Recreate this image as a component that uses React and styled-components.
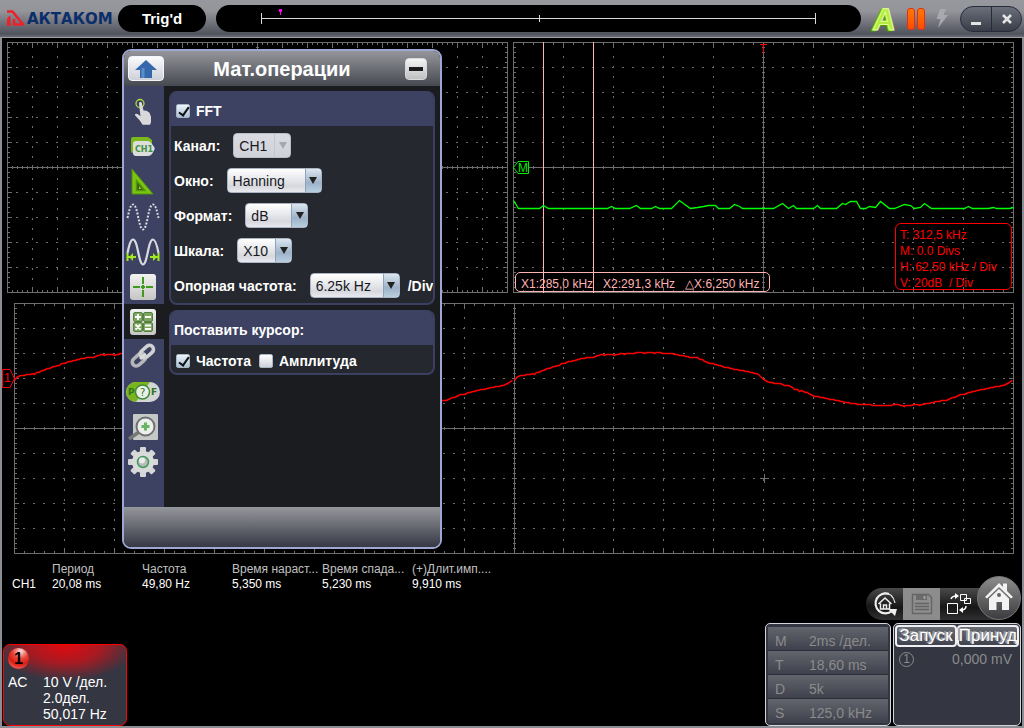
import styled, { createGlobalStyle } from 'styled-components'

const WAVE = [
    [0, 76], [4, 73], [10, 71.5], [20, 70.3], [29, 67], [41, 62.7], [50, 59.3], [57, 57.7], [66, 55.3], [79, 53.7],
    [86, 51.3], [100, 51], [114, 49.7], [132, 49.3], [152, 49.7], [161, 51], [171, 52.7], [184, 54.7], [191, 58],
    [200, 60.7], [210, 63.7], [219, 65.7], [232, 68], [242, 70], [246, 73], [249, 75.7], [256, 79.3], [264, 80],
    [274, 82.3], [281, 85.7], [294, 89.7], [300, 92.7], [309, 94.3], [322, 97], [339, 100.3], [352, 101.3],
    [367, 102.3], [382, 101.3], [391, 102], [409, 101], [419, 98.7], [432, 96.7], [442, 92.7], [454, 89.3],
    [466, 86.3], [479, 83.7], [489, 81.7], [496, 78.3], [499, 76.3],
]

const SPECTRUM = [
    [0, 158], [5, 166], [26, 166], [30, 163], [35, 166], [94, 166], [98, 164], [102, 166], [116, 166], [123, 163],
    [127, 166], [138, 166], [142, 164], [146, 166], [158, 166], [166, 158], [170, 161], [177, 166], [184, 165],
    [190, 164], [195, 163], [202, 163], [205, 166], [216, 166], [221, 162], [226, 164], [229, 166], [260, 166],
    [269, 161], [275, 166], [280, 163], [283, 166], [300, 166], [304, 163], [307, 166], [323, 166], [329, 161],
    [332, 162], [337, 159], [343, 159], [347, 166], [352, 166], [356, 164], [362, 165], [367, 159], [376, 166],
    [381, 166], [391, 162], [397, 163], [401, 166], [407, 165], [411, 161], [418, 166], [451, 166], [455, 164],
    [459, 166], [475, 166], [480, 165], [483, 166], [496, 166], [500, 165],
]

const MEASURES = [
    ['Период', '20,08 ms'],
    ['Частота', '49,80 Hz'],
    ['Время нараст...', '5,350 ms'],
    ['Время спада...', '5,230 ms'],
    ['(+)Длит.имп....', '9,910 ms'],
]

const TIMEBASE = [['M', '2ms /дел.'], ['T', '18,60 ms'], ['D', '5k'], ['S', '125,0 kHz']]

const toPoints = (list, dx = 0) => list.map(([x, y]) => `${x + dx + 0.5},${y + 0.5}`).join(' ')

// Sampled signal jumps a little around the smooth curve
const noisy = (list) => {
    const out = []
    for (let i = 0; i < list.length - 1; i++) {
        const [x1, y1] = list[i]
        const [x2, y2] = list[i + 1]
        for (let x = x1; x < x2; x += 2) {
            const y = y1 + ((y2 - y1) * (x - x1)) / (x2 - x1)
            out.push([x, Math.round(y + ((x * 7) % 5 === 0 ? 0.6 : -0.1))])
        }
    }
    return out
}

const TRACE = noisy(WAVE)

const Grid = ({ width, cols }) => {
    const div = width / cols
    const h = 250
    const ticks = []
    for (let i = 0; i <= cols * 5; i++) {
        const x = Math.round((i * div) / 5) + 0.5
        const len = i % 5 ? 2 : 5
        const mid = i % 5 ? 1 : 2
        ticks.push(`M${x} 0v${len + 1}M${x} ${h + 1}v-${len + 1}M${x} ${125 - mid}v${mid * 2 + 1}`)
    }
    for (let i = 0; i <= 50; i++) {
        const y = i * 5 + 0.5
        const len = i % 5 ? 2 : 4
        const mid = i % 5 ? 1 : 2
        ticks.push(`M0 ${y}h${len + 1}M${width + 1} ${y}h-${len + 1}M${Math.round(width / 2) - mid} ${y}h${mid * 2 + 1}`)
    }
    const dots = []
    for (let i = 1; i < cols; i++) {
        const x = Math.round(i * div) + 0.5
        dots.push(`M${x} 14V124M${x} 136V246`)
    }
    for (let i = 1; i < 10; i++) {
        dots.push(`M9 ${i * 25 + 0.5}H${width - 4}`)
    }
    return (
        <g fill="none" stroke="#6e6e6e" shapeRendering="crispEdges">
            <path d={`M.5 .5H${width + 0.5}V${h + 0.5}H.5ZM0 125.5H${width}M${Math.round(width / 2) + 0.5} 0V${h}`} />
            <path d={ticks.join('')} />
            <path d={dots.join('')} strokeDasharray="2 8" />
        </g>
    )
}

const Logo = () => (
    <LogoBox>
        <svg width="19" height="17" viewBox="0 0 19 17">
            <path d="M1 1.500h5.500L17 14.500H8V9" fill="none" stroke="#ee2029" strokeWidth="2.600" strokeLinejoin="round" />
            <path d="M1 8.500 4.500 5v11H1Z" fill="#ee2029" />
        </svg>
        <LogoText>АКТАКОМ</LogoText>
    </LogoBox>
)

const AutoIcon = () => (
    <svg width="28" height="30" viewBox="0 0 28 30" fontFamily="Liberation Sans" fontWeight="bold" fontSize="31">
        <g transform="skewX(-6)">
            <text x="4" y="27" fill="#4a9600" stroke="#4a9600">A</text>
            <text x="5" y="26" fill="#74bd12" stroke="#8fd41f">A</text>
            <text x="6" y="26" fill="#b5ec3c" stroke="#e0ff9c">A</text>
        </g>
    </svg>
)

const PauseIcon = () => (
    <svg width="20" height="24" viewBox="0 0 20 24">
        <defs>
            <linearGradient id="pause" x1="0" y1="0" x2="0" y2="1">
                <stop offset="0" stopColor="#ff7a00" />
                <stop offset="1" stopColor="#ff4a00" />
            </linearGradient>
        </defs>
        <rect x="1.500" y="1.500" width="7" height="21" rx="2.500" fill="url(#pause)" stroke="#e0301a" />
        <rect x="11.500" y="1.500" width="7" height="21" rx="2.500" fill="url(#pause)" stroke="#e0301a" />
    </svg>
)

const BoltIcon = () => (
    <svg width="14" height="21" viewBox="0 0 14 21">
        <path d="M5 1h6L8.500 7H13L3 20l2.500-9H1.500Z" fill="#a7a9ae" />
    </svg>
)

const TouchIcon = () => (
    <svg width="34" height="30" viewBox="0 0 34 30">
        <circle cx="14" cy="6.500" r="4" fill="none" stroke="#a9dc3a" strokeWidth="1.300" />
        <path d="M13 6.500c0-2 3-2 3 0l1.500 7 3 .3 3 2 1.500 4v5.500l-1 2.500h-7.500l-2.500-4-5-5.500c-.5-1.500 1.500-2.300 3-1l2.500 2Z" fill="#d9d9db" />
    </svg>
)

const ChannelIcon = () => (
    <svg width="34" height="30" viewBox="0 0 34 30">
        <path d="M5 7q0-2 2-2h15l4 3v10H8v3H7q-2 0-2-2Z" fill="#7cb81c" />
        <path d="M7 12q0-3 3-3h12q2 0 4 3l2.500 3.500q.5 1.500-.5 3L26 22q-1.500 2-4 2H10q-3 0-3-3Z" fill="#dcdedd" />
        <text x="9" y="20" fontFamily="DejaVu Sans" fontSize="8" fontWeight="bold" fill="#3d9141">CH1</text>
    </svg>
)

const TriangleIcon = () => (
    <svg width="34" height="30" viewBox="0 0 34 30">
        <path d="M6 2 27 27H6Z" fill="#7ac412" stroke="#4f930a" />
        <path d="M10.500 13.500 19 23.500H10.500Z" fill="#3e5a1a" stroke="#56960b" strokeWidth="1.500" />
        <path d="M13 19l2.500 3H13Z" fill="#8ad32a" />
    </svg>
)

const SINE = 'M1.500 16C3 9 4.500 2.500 7 2.500c5 0 5.500 25 10 25s5-25 10-25c2.500 0 4 6 5.500 13.500'

const DottedIcon = () => (
    <svg width="34" height="30" viewBox="0 0 34 30">
        <path d={SINE} fill="none" stroke="#d8dae0" strokeWidth="2" strokeDasharray="2 1.500" />
    </svg>
)

const SpanIcon = () => (
    <svg width="34" height="30" viewBox="0 0 34 30">
        <path d={SINE} fill="none" stroke="#d8dae0" strokeWidth="2.200" />
        <path d="M1.500 16v8M32.500 16v8M2 20h8M24 20h8" stroke="#a2e81d" strokeWidth="2" />
        <path d="M3 20l4-4v8ZM31 20l-4-4v8Z" fill="#a2e81d" />
    </svg>
)

const Tile = ({ children }) => (
    <svg width="28" height="28" viewBox="0 0 28 28">
        <defs>
            <linearGradient id="tile" x1="0" y1="0" x2="0" y2="1">
                <stop offset="0" stopColor="#f2f3f1" />
                <stop offset="1" stopColor="#c4c5c4" />
            </linearGradient>
        </defs>
        <rect x="1" y="1" width="26" height="26" rx="3" fill="url(#tile)" />
        {children}
    </svg>
)

const CrossIcon = () => (
    <Tile>
        <path d="M4 14h7M17 14h7M14 4v7M14 17v7M12 14h4M14 12v4" stroke="#409a1f" strokeWidth="2" />
    </Tile>
)

const MathIcon = () => (
    <Tile>
        {[[4.5, 4.5], [14.5, 4.5], [4.5, 14.5], [14.5, 14.5]].map(([x, y]) => (
            <rect key={`${x}-${y}`} x={x} y={y} width="9" height="9" rx="1.500" fill="#7fa763" stroke="#55803f" />
        ))}
        <path d="M6 9h6M9 6v6M16 9h6M6.500 16.500l5 5M11.500 16.500l-5 5M16 17.500h6M16 21h6" stroke="#fff" strokeWidth="1.800" />
    </Tile>
)

const LinkIcon = () => (
    <svg width="30" height="30" viewBox="0 0 30 30" fill="none" strokeWidth="3.600">
        <rect x="-7" y="-4" width="15" height="8" rx="4" stroke="#b4b6b8" transform="translate(10.500 18) rotate(-42)" />
        <rect x="-7" y="-4" width="15" height="8" rx="4" stroke="#cfd1d2" transform="translate(18.500 10) rotate(-42)" />
        <path d="M12 17l5.500-5" stroke="#d9dbdc" strokeWidth="3" />
    </svg>
)

const PassIcon = () => (
    <svg width="34" height="22" viewBox="0 0 34 22" fontFamily="DejaVu Sans" fontWeight="bold">
        <rect x="0" y="1" width="34" height="20" rx="10" fill="#d4d6d6" />
        <path d="M10 1h14L10 21A10 10 0 0 1 10 1Z" fill="#7bb51e" />
        <circle cx="16.500" cy="11" r="7" fill="#e9efe6" stroke="#3f8a35" strokeWidth="1.500" />
        <text x="2" y="14" fontSize="9" fill="#2f7420">P</text>
        <text x="14" y="15" fontSize="10" fontWeight="normal" fill="#2f7420">?</text>
        <text x="25" y="14" fontSize="9" fill="#2f7420">F</text>
    </svg>
)

const ZoomIcon = () => (
    <svg width="32" height="28" viewBox="0 0 32 28">
        <rect x="6" y="1" width="25" height="26" rx="1" fill="#c6c8c8" />
        <path d="M12 19 2 26" stroke="#767878" strokeWidth="3.500" />
        <circle cx="18.500" cy="13.500" r="9" fill="#ecefec" stroke="#707272" strokeWidth="2" />
        <path d="M14.500 13.500h8M18.500 9.500v8" stroke="#69b563" strokeWidth="3" />
    </svg>
)

const GearIcon = () => (
    <svg width="30" height="30" viewBox="-15 -15 30 30">
        {[0, 45, 90, 135].map((a) => (
            <rect key={a} x="-3" y="-15" width="6" height="30" rx="1" fill="#d5d6d6" transform={`rotate(${a})`} />
        ))}
        <circle r="11" fill="#d9dada" />
        <circle r="5.500" fill="#b9bbbb" stroke="#3d9c58" strokeWidth="1.500" />
        <circle cx="-1" cy="-1.500" r="3" fill="#ececec" />
    </svg>
)

const TOOLS = [
    ['Касание', TouchIcon], ['Канал', ChannelIcon], ['Измерения', TriangleIcon], ['Сбор', DottedIcon],
    ['Развертка', SpanIcon], ['Курсоры', CrossIcon], ['Математика', MathIcon], ['Связь', LinkIcon],
    ['Тест', PassIcon], ['Масштаб', ZoomIcon], ['Настройки', GearIcon],
]

const Field = ({ id, label, options, width, disabled, suffix }) => (
    <FieldRow>
        <FieldLabel htmlFor={id}>{label}</FieldLabel>
        <SelectWrap $width={width} $disabled={disabled}>
            <Select id={id} disabled={disabled} defaultValue={options[0]}>
                {options.map((o) => <option key={o}>{o}</option>)}
            </Select>
            <Arrow $disabled={disabled}>
                <svg width="8" height="7" viewBox="0 0 8 7"><path d="M0 0h8L4 7Z" fill="currentColor" /></svg>
            </Arrow>
        </SelectWrap>
        {suffix && <Suffix>{suffix}</Suffix>}
    </FieldRow>
)

const MathPanel = () => (
    <Panel>
        <PanelHead>
            <UpButton type="button" aria-label="Вверх">
                <svg width="24" height="18" viewBox="0 0 24 18">
                    <path d="M12 0 23 10h-5v8H6v-8H1Z" fill="#3568ab" />
                    <path d="M9 8v10" stroke="#5a8cc8" strokeWidth="3" />
                </svg>
            </UpButton>
            <PanelTitle>Мат.операции</PanelTitle>
            <MinButton type="button" aria-label="Свернуть" />
        </PanelHead>
        <PanelBody>
            <ToolBar>
                {TOOLS.map(([name, Icon]) => (
                    <ToolButton key={name} type="button" aria-label={name} $active={name === 'Математика'}>
                        <Icon />
                    </ToolButton>
                ))}
            </ToolBar>
            <Content>
                <Group>
                    <GroupHead>
                        <CheckLabel><Check type="checkbox" defaultChecked />FFT</CheckLabel>
                    </GroupHead>
                    <Fields>
                        <Field id="channel" label="Канал:" options={['CH1', 'CH2']} width={58} disabled />
                        <Field id="window" label="Окно:" options={['Hanning', 'Hamming']} width={95} />
                        <Field id="format" label="Формат:" options={['dB', 'Vrms']} width={63} />
                        <Field id="scale" label="Шкала:" options={['X10', 'X1']} width={55} />
                        <Field id="freq" label="Опорная частота:" options={['6.25k Hz']} width={90} suffix="/Div" />
                    </Fields>
                </Group>
                <Group>
                    <GroupHead>Поставить курсор:</GroupHead>
                    <CheckRow>
                        <CheckLabel><Check type="checkbox" defaultChecked />Частота</CheckLabel>
                        <CheckLabel><Check type="checkbox" />Амплитуда</CheckLabel>
                    </CheckRow>
                </Group>
            </Content>
        </PanelBody>
        <PanelFoot />
    </Panel>
)

const Screens = () => (
    <Stage>
        <TopRow>
            <Screen>
                <Plot viewBox="0 0 501 251" preserveAspectRatio="none"><Grid width={500} cols={20} /></Plot>
            </Screen>
            <Screen>
                <Plot viewBox="0 0 501 251" preserveAspectRatio="none">
                    <Grid width={500} cols={10} />
                    <path d="M30.500 0V251M80.500 0V251" stroke="#ffb4b4" shapeRendering="crispEdges" />
                    <polyline points={toPoints(SPECTRUM)} fill="none" stroke="#00ff00" strokeWidth="1.300" />
                    <path d="M.5 125.500 5 119.500H15.500V131.500H5Z" fill="#000" stroke="#00f000" />
                    <text x="5" y="130" fontFamily="Liberation Sans" fontSize="12" fill="#00f000">M</text>
                    <path d="M247 2.500h7M250.500 2V11" stroke="#f00" shapeRendering="crispEdges" />
                </Plot>
                <CursorBox>
                    <span>X1:285,0 kHz</span>
                    <span>X2:291,3 kHz</span>
                    <span>△X:6,250 kHz</span>
                </CursorBox>
                <FftBox>
                    <div>T: 312,5 kHz</div>
                    <div>M: 0.0 Divs</div>
                    <div>H: 62,50 kHz / Div</div>
                    <div>V: 20dB&nbsp; / Div</div>
                </FftBox>
            </Screen>
        </TopRow>
        <WideScreen>
            <Plot viewBox="0 0 1000 251" preserveAspectRatio="none">
                <Grid width={999} cols={20} />
                <path d="M746 175.500h9M750.500 171v9" stroke="#6e6e6e" shapeRendering="crispEdges" />
                <g fill="none" stroke="#f00" strokeWidth="1.500">
                    <polyline points={toPoints(TRACE)} />
                    <polyline points={toPoints(TRACE, 500)} />
                </g>
                <path d="M-11.500 66.500H-4L.5 75.500-4 84.500H-11.500Z" fill="#000" stroke="#f00" />
                <text x="-10" y="79" fontFamily="Liberation Sans" fontSize="12" fill="#f00">1</text>
            </Plot>
        </WideScreen>
        <MathPanel />
    </Stage>
)

const Dock = () => (
    <DockBar>
        <DockPill>
            <DockButton type="button" aria-label="По умолчанию">
                <svg width="26" height="26" viewBox="0 0 26 26" fill="none" stroke="#eee">
                    <path d="M17 3A10 10 0 1 0 20 20" strokeWidth="2.200" />
                    <path d="M12 2Q21 2 23 12" strokeWidth="1.200" />
                    <path d="M16 18h9l-2 7Z" fill="#eee" stroke="none" />
                    <path d="M6.500 13 13 7l6.500 6M8.500 12.500V18h9v-5.500M11.500 18v-4h3v4" strokeWidth="1.500" />
                </svg>
            </DockButton>
            <DockButton type="button" aria-label="Сохранить" $held>
                <svg width="22" height="22" viewBox="0 0 22 22">
                    <path d="M1.500 1.500h16l3 3v16h-19Z" fill="#8e8e8e" stroke="#666" strokeWidth="1.500" />
                    <path d="M5 2h11v5H5Z" fill="#6a6a6a" />
                    <path d="M12.500 3h2v3h-2Z" fill="#a0a0a0" />
                    <path d="M4 10.500h14M4 13.500h14M4 16.500h14" stroke="#636363" strokeWidth="1.500" />
                </svg>
            </DockButton>
            <DockButton type="button" aria-label="Обмен">
                <svg width="26" height="22" viewBox="0 0 26 22" fill="none" stroke="#fff">
                    <path d="M1.500 10.500h10v10h-10ZM14.500 1.500h6v6h-6ZM18.500 5.500h6v5h-6Z" />
                    <path d="M5 6q1-3 5-3M20 13q0 4-5 4" strokeWidth="1.500" />
                    <path d="M9 0l4 3-4 3ZM17 14l-4 3 4 3Z" fill="#fff" stroke="none" />
                </svg>
            </DockButton>
        </DockPill>
        <HomeButton type="button" aria-label="Домой">
            <svg width="30" height="30" viewBox="0 0 30 30" fill="#f2f2f2">
                <path d="M1 16 15 2l4 4V2.500h4V10l6 6-2 1.500L15 6 3 17.500Z" />
                <path d="M5 17.500 15 8l10 9.500V29h-7v-8h-5.500v8H5Z" />
                <circle cx="15" cy="14" r="2" fill="#666" />
            </svg>
        </HomeButton>
    </DockBar>
)

const App = () => (
    <Page>
        <GlobalStyle />
        <Header>
            <Logo />
            <TrigPill>Trig'd</TrigPill>
            <PositionPill>
                <PositionLine viewBox="0 0 554 18" preserveAspectRatio="none" shapeRendering="crispEdges">
                    <path d="M1.500 4V15M552.500 4V15M1.500 9.500H552.500M277.500 6V13" stroke="#d8d8d8" fill="none" />
                    <path d="M19 0h3v3h-1v3h-1V3h-1Z" fill="#ff00ff" />
                </PositionLine>
            </PositionPill>
            <Status><AutoIcon /><PauseIcon /><BoltIcon /></Status>
            <WindowButtons>
                <WindowButton type="button" aria-label="Скрыть">
                    <svg width="12" height="12" viewBox="0 0 12 12"><path d="M1 10.500h10" stroke="#e4e4e4" strokeWidth="3" /></svg>
                </WindowButton>
                <WindowButton type="button" aria-label="Закрыть">
                    <svg width="12" height="12" viewBox="0 0 12 12"><path d="M2 2l8 8M10 2l-8 8" stroke="#e4e4e4" strokeWidth="2.500" /></svg>
                </WindowButton>
            </WindowButtons>
        </Header>
        <Screens />
        <Bottom>
            <BottomLeft>
                <MeasureTable>
                    <thead>
                        <tr><td />{MEASURES.map(([name]) => <th key={name} scope="col">{name}</th>)}</tr>
                    </thead>
                    <tbody>
                        <tr><RowHead scope="row">CH1</RowHead>{MEASURES.map(([name, value]) => <td key={name}>{value}</td>)}</tr>
                    </tbody>
                </MeasureTable>
                <ChannelCard>
                    <Ball>1</Ball>
                    <ChannelInfo>
                        <span>AC</span>
                        <div>
                            <div>10 V /дел.</div>
                            <div>2.0дел.</div>
                            <div>50,017 Hz</div>
                        </div>
                    </ChannelInfo>
                </ChannelCard>
            </BottomLeft>
            <BottomRight>
                <Dock />
                <InfoRow>
                    <TimeCard>
                        {TIMEBASE.map(([key, value]) => (
                            <TimeRow key={key}><TimeKey>{key}</TimeKey><span>{value}</span></TimeRow>
                        ))}
                    </TimeCard>
                    <TriggerCard>
                        <TriggerButtons>
                            <TriggerButton type="button">Запуск</TriggerButton>
                            <TriggerButton type="button">Принуд</TriggerButton>
                        </TriggerButtons>
                        <TriggerLevel><Source>1</Source><span>0,000 mV</span></TriggerLevel>
                    </TriggerCard>
                </InfoRow>
            </BottomRight>
        </Bottom>
    </Page>
)

export default App

const GlobalStyle = createGlobalStyle`
* { box-sizing: border-box; }
body {
margin: 0;
background: #000;
color: #fff;
font-family: "Liberation Sans", Arial, sans-serif;
}
button, select, input { font-family: inherit; }
svg { display: block; flex: none; }
`

const Page = styled.div`
display: flex;
flex-direction: column;
min-height: 100vh;
border: 2px solid #8b8e94;
border-top: 0;
`

const Header = styled.header`
display: flex;
align-items: center;
height: 38px;
margin: 0 -2px;
padding: 0 2px 0 6px;
border-bottom: 1px solid #9c9ea3;
background: linear-gradient(#97989d 0%, #94959a 30%, #50525d 92%, #6a6c74 100%);
`

const LogoBox = styled.div`
display: flex;
align-items: center;
width: 112px;
`

const LogoText = styled.span`
margin-left: 2px;
color: #0b2e6b;
font-family: "DejaVu Sans", sans-serif;
font-weight: bold;
font-size: 15px;
line-height: 18px;
`

const TrigPill = styled.div`
width: 88px;
height: 27px;
border-radius: 14px;
background: #000;
font-size: 15px;
font-weight: bold;
line-height: 27px;
text-align: center;
`

const PositionPill = styled.div`
flex: 1;
height: 27px;
margin-left: 10px;
padding: 4px 44px;
border-radius: 14px;
background: #000;
`

const PositionLine = styled.svg`
width: 100%;
height: 18px;
`

const Status = styled.div`
display: flex;
align-items: center;
gap: 9px;
padding: 0 11px 0 8px;
`

const WindowButtons = styled.div`
display: flex;
height: 26px;
border: 1px solid #252b3b;
border-radius: 13px;
background: linear-gradient(#6a6f7a, #3a3d48);
overflow: hidden;
`

const WindowButton = styled.button`
display: flex;
align-items: center;
justify-content: center;
width: 30px;
padding: 0;
border: 0;
background: none;
& + & { border-left: 1px solid #252b3b; }
`

const Stage = styled.main`
position: relative;
padding: 4px 8px 0 5px;
`

const TopRow = styled.div`
display: flex;
gap: 5px;
`

const Screen = styled.section`
position: relative;
flex: 1;
min-width: 0;
`

const WideScreen = styled.section`
margin: 10px 0 0 7px;
`

const Plot = styled.svg`
width: 100%;
height: 251px;
overflow: visible;
`

const CursorBox = styled.div`
position: absolute;
left: 2px;
bottom: 1px;
display: flex;
gap: 10px;
height: 20px;
padding: 0 10px 0 5px;
border: 1px solid #ffb4b4;
border-radius: 5px;
color: #ffb4b4;
font-size: 12px;
line-height: 22px;
white-space: nowrap;
`

const FftBox = styled.div`
position: absolute;
right: 2px;
bottom: 3px;
width: 117px;
height: 67px;
padding: 3px 4px;
border: 1px solid #f00;
border-radius: 6px;
color: #f00;
font-size: 12px;
line-height: 16px;
white-space: nowrap;
`

const Panel = styled.section`
position: absolute;
left: 120px;
top: 11px;
width: 320px;
border: 2px solid #9da7d2;
border-radius: 9px;
background: #1b1c20;
overflow: hidden;
`

const PanelHead = styled.div`
display: flex;
align-items: center;
justify-content: space-between;
height: 35px;
padding: 0 13px 0 4px;
background: linear-gradient(#94969b, #474951);
`

const PanelTitle = styled.h1`
margin: 0;
padding-right: 5px;
font-size: 20px;
line-height: 24px;
`

const UpButton = styled.button`
display: flex;
align-items: center;
justify-content: center;
width: 36px;
height: 25px;
padding: 0;
border: 1px solid #f5f6fa;
border-radius: 4px;
background: linear-gradient(#fafbfd, #cdd0d9);
`

const MinButton = styled.button`
width: 22px;
height: 22px;
padding: 0;
border: 1px solid #d8d8da;
border-radius: 4px;
background: linear-gradient(#f4f4f4, #bfc0c2);
&::before {
content: "";
display: block;
height: 4px;
margin: 0 3px;
background: #1c1c1e;
}
`

const PanelBody = styled.div`
display: flex;
height: 421px;
`

const ToolBar = styled.nav`
width: 40px;
padding-top: 8px;
background: #3e4262;
`

const ToolButton = styled.button`
display: flex;
align-items: center;
justify-content: center;
width: 40px;
height: 35px;
padding: 0 2px 0 0;
border: 0;
background: ${(p) => (p.$active ? '#1b1c20' : 'none')};
`

const Content = styled.div`
display: flex;
flex: 1;
flex-direction: column;
gap: 5px;
min-width: 0;
padding: 5px;
`

const Group = styled.div`
border: 2px solid #3b3f60;
border-top: 0;
border-radius: 8px;
background: #25282e;
font-size: 14px;
font-weight: bold;
overflow: hidden;
`

const GroupHead = styled.div`
display: flex;
align-items: center;
height: 35px;
padding: 4px 3px 0;
background: #3e4262;
`

const Fields = styled.div`
padding: 2px 0 0 3px;
`

const FieldRow = styled.div`
display: flex;
align-items: center;
height: 35px;
white-space: nowrap;
`

const FieldLabel = styled.label`
margin-right: 13px;
`

const SelectWrap = styled.div`
position: relative;
flex: none;
width: ${(p) => p.$width}px;
height: 25px;
border: 1px solid ${(p) => (p.$disabled ? '#b9bdc7' : '#aab4c4')};
border-radius: 4px;
background: ${(p) => (p.$disabled ? 'linear-gradient(#d9dbe1, #d0d2d9)' : 'linear-gradient(#fff, #d6d8de 75%, #e8eaef)')};
overflow: hidden;
`

const Select = styled.select`
width: 100%;
height: 23px;
padding: 0 17px 0 5px;
border: 0;
outline: 0;
appearance: none;
background: none;
color: #17181c;
font-size: 14px;
opacity: 1;
`

const Arrow = styled.span`
position: absolute;
top: 0;
right: 0;
display: flex;
align-items: center;
justify-content: center;
width: 16px;
height: 23px;
border-left: 1px solid ${(p) => (p.$disabled ? '#c3c6cd' : '#8ea2b8')};
background: ${(p) => (p.$disabled ? 'none' : 'linear-gradient(#dbe6f0, #9db2c9 60%, #b8cfe0)')};
color: ${(p) => (p.$disabled ? '#a5a8b0' : '#222')};
pointer-events: none;
`

const Suffix = styled.span`
margin-left: 8px;
font-weight: bold;
`

const CheckRow = styled.div`
display: flex;
align-items: center;
gap: 6px;
height: 28px;
padding: 4px 3px 0;
`

const CheckLabel = styled.label`
display: flex;
align-items: center;
gap: 6px;
padding-left: 2px;
`

const Check = styled.input`
appearance: none;
position: relative;
width: 14px;
height: 14px;
margin: 0;
border: 1px solid #a9b6c6;
border-radius: 2px;
background: linear-gradient(#fff, #cfd2da);
&:checked { background: linear-gradient(#eef4fa, #a9c1d8); }
&:checked::after {
content: "";
position: absolute;
left: 4px;
top: 0;
width: 4px;
height: 9px;
border: solid #111;
border-width: 0 2px 2px 0;
transform: rotate(35deg);
}
`

const PanelFoot = styled.div`
height: 40px;
background: linear-gradient(#96979c, #363845);
`

const Bottom = styled.footer`
display: flex;
flex: 1;
justify-content: space-between;
min-height: 172px;
`

const BottomLeft = styled.div`
display: flex;
flex-direction: column;
justify-content: space-between;
padding: 8px 0 0 1px;
`

const MeasureTable = styled.table`
table-layout: fixed;
width: 490px;
margin-left: 9px;
border-collapse: collapse;
font-size: 12px;
line-height: 15px;
th, td {
width: 90px;
padding: 0;
font-weight: normal;
text-align: left;
white-space: nowrap;
}
thead th { color: #c0c0c0; }
thead td, tbody th { width: 40px; }
`

const RowHead = styled.th`
color: #fff;
`

const ChannelCard = styled.div`
width: 124px;
height: 82px;
padding: 3px 4px;
border: 1px solid #f00;
border-radius: 7px;
background: radial-gradient(ellipse 72px 36px at 50% 0, #e00a10 0%, #a81a22 50%, #343642 100%) #343642;
font-size: 14px;
`

const Ball = styled.div`
width: 21px;
height: 21px;
border-radius: 50%;
background: radial-gradient(circle at 60% 15%, #ffe0dc 0, #e8463c 35%, #d81c14 60%, #ff8a80 100%);
color: #000;
font-size: 16px;
font-weight: bold;
line-height: 21px;
text-align: center;
`

const ChannelInfo = styled.div`
display: flex;
margin-top: 5px;
line-height: 16px;
& > span { width: 35px; }
`

const BottomRight = styled.div`
display: flex;
flex-direction: column;
align-items: flex-end;
justify-content: flex-end;
padding-right: 1px;
`

const DockBar = styled.div`
display: flex;
align-items: flex-end;
margin-bottom: 3px;
`

const DockPill = styled.div`
display: flex;
height: 32px;
padding-right: 20px;
border-radius: 16px 0 0 16px;
background: linear-gradient(#4a4a4c, #161617 60%, #303032);
overflow: hidden;
`

const DockButton = styled.button`
display: flex;
align-items: center;
justify-content: center;
width: 37px;
padding: 0;
border: 0;
background: ${(p) => (p.$held ? '#8c8c8c' : 'none')};
`

const HomeButton = styled.button`
display: flex;
align-items: center;
justify-content: center;
width: 44px;
height: 44px;
margin-left: -20px;
padding: 0 0 4px;
border: 1px solid #777;
border-radius: 50%;
background: linear-gradient(#8c8c8c, #3c3c3e);
`

const InfoRow = styled.div`
display: flex;
gap: 2px;
`

const TimeCard = styled.div`
width: 126px;
padding: 3px 2px 2px;
border: 1px solid #d4d5dc;
border-radius: 5px;
background: #343642;
color: #8b8b8b;
font-size: 14px;
`

const TimeRow = styled.div`
display: flex;
height: 24px;
padding-left: 7px;
border-bottom: 1px solid #2b2d38;
background: linear-gradient(#63656d, #3e404c);
line-height: 28px;
&:last-child { border-bottom: 0; }
`

const TimeKey = styled.span`
width: 34px;
`

const TriggerCard = styled.div`
width: 128px;
padding: 1px;
border: 1px solid #d4d5dc;
border-radius: 5px;
background: #343642;
`

const TriggerButtons = styled.div`
display: flex;
height: 22px;
`

const TriggerButton = styled.button`
display: flex;
align-items: center;
justify-content: center;
flex: 1;
min-width: 0;
padding: 0;
border: 2px solid #f0f0f4;
border-radius: 4px;
background: linear-gradient(#6a6c74, #40424e);
color: #fff;
font-size: 17px;
line-height: 18px;
text-shadow: -2px -1px #9a9ba1, -1px 0 #9a9ba1;
`

const TriggerLevel = styled.div`
display: flex;
align-items: center;
justify-content: space-between;
padding: 2px 7px 0 4px;
color: #8b8b8b;
font-size: 14px;
line-height: 20px;
`

const Source = styled.span`
width: 15px;
height: 15px;
border: 1px solid #8b8b8b;
border-radius: 50%;
font-size: 12px;
line-height: 13px;
text-align: center;
`
